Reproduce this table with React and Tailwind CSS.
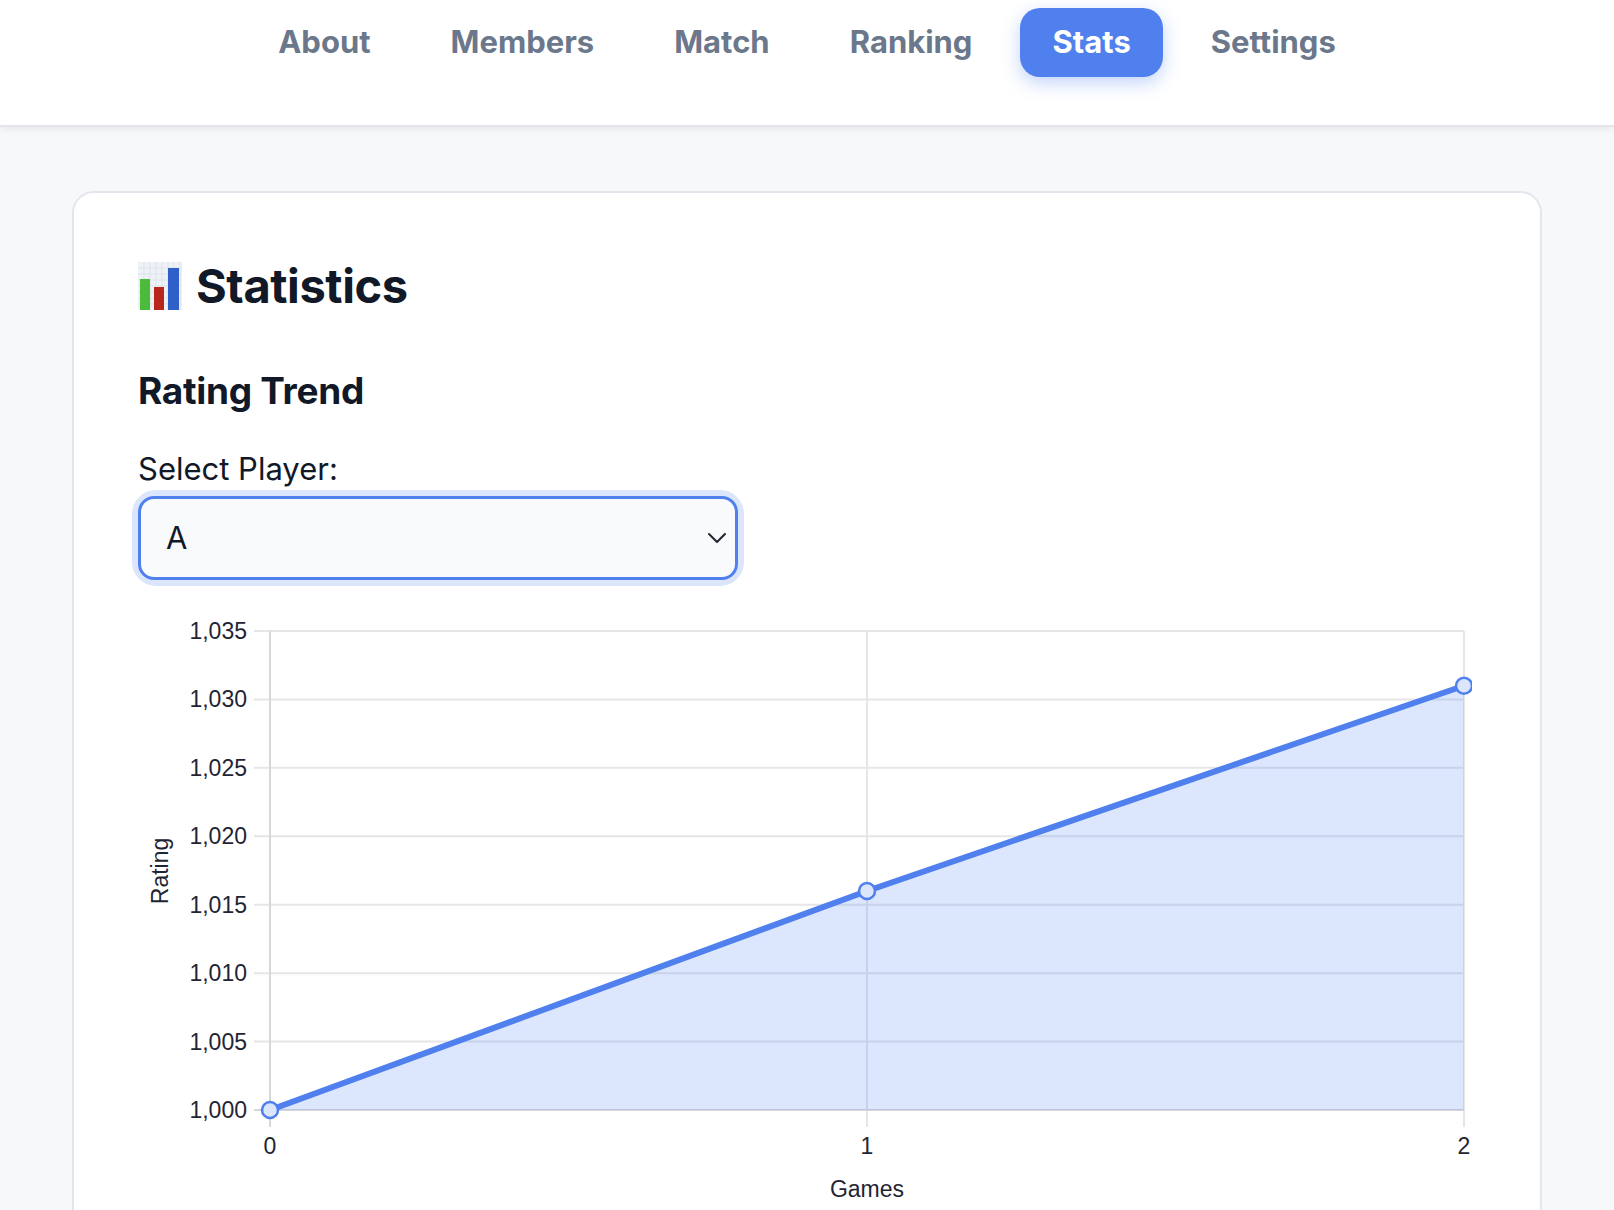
import { useState } from 'react';

const tabs = ['About', 'Members', 'Match', 'Ranking', 'Stats', 'Settings'];

// chart geometry (svg coords)
const left = 132;
const right = 1326;
const top = 31;
const bottom = 510;
const minY = 1000;
const maxY = 1035;
const data = [1000, 1016, 1031];

function yPos(v) {
    return bottom - ((v - minY) / (maxY - minY)) * (bottom - top);
}

function xPos(i) {
    return left + (i / (data.length - 1)) * (right - left);
}

function ChartEmoji() {
    return (
        <svg width="44" height="48" viewBox="0 0 44 48" className="shrink-0">
            <rect x="0" y="0" width="44" height="48" fill="#eef2f7" />
            {[6, 12, 18, 24, 30, 36, 42].map((x) => (
                <line key={'v' + x} x1={x} y1="0" x2={x} y2="48" stroke="#dde3ec" strokeWidth="1" />
            ))}
            {[6, 12, 18, 24, 30, 36, 42].map((y) => (
                <line key={'h' + y} x1="0" y1={y} x2="44" y2={y} stroke="#dde3ec" strokeWidth="1" />
            ))}
            <rect x="2" y="17" width="10" height="31" fill="#4cbb3c" />
            <rect x="16" y="25" width="10" height="23" fill="#b8261c" />
            <rect x="30" y="6" width="11" height="42" fill="#2f5fc8" />
        </svg>
    );
}

function RatingChart() {
    const ticks = [1000, 1005, 1010, 1015, 1020, 1025, 1030, 1035];
    const pts = data.map((v, i) => [xPos(i), yPos(v)]);
    const line = pts.map((p) => p.join(',')).join(' ');
    const area = `${left},${bottom} ${line} ${right},${bottom}`;

    return (
        <svg width="1334" height="620" className="block" style={{ fontFamily: '"Liberation Sans", Arial, sans-serif' }}>
            {/* grid */}
            {ticks.map((t) => (
                <line key={t} x1={116} y1={yPos(t)} x2={right} y2={yPos(t)} stroke="#e6e6e9" strokeWidth="2" />
            ))}
            {data.map((_, i) => (
                <line key={i} x1={xPos(i)} y1={top} x2={xPos(i)} y2={527} stroke="#e6e6e9" strokeWidth="2" />
            ))}
            <line x1={left} y1={top} x2={left} y2={527} stroke="#d6d6db" strokeWidth="2" />
            <line x1={116} y1={bottom} x2={right} y2={bottom} stroke="#d6d6db" strokeWidth="2" />

            {/* labels */}
            {ticks.map((t) => (
                <text key={t} x={109} y={yPos(t) + 8} textAnchor="end" fontSize="23" fill="#1f2533">
                    {t.toLocaleString('en-US')}
                </text>
            ))}
            {data.map((_, i) => (
                <text key={i} x={xPos(i)} y={554} textAnchor="middle" fontSize="23" fill="#1f2533">
                    {i}
                </text>
            ))}
            <text x={729} y={597} textAnchor="middle" fontSize="23" fill="#1f2533">Games</text>
            <text x={0} y={0} textAnchor="middle" fontSize="23" fill="#1f2533" transform="translate(30 271) rotate(-90)">
                Rating
            </text>

            {/* data */}
            <polygon points={area} fill="rgba(79,128,238,0.2)" />
            <polyline points={line} fill="none" stroke="#4f80ee" strokeWidth="6" strokeLinejoin="round" />
            {pts.map(([x, y], i) => (
                <circle key={i} cx={x} cy={y} r="8" fill="#dce6fb" stroke="#4f80ee" strokeWidth="2.5" />
            ))}
        </svg>
    );
}

function App() {
    const [tab, setTab] = useState('Stats');
    const [player, setPlayer] = useState('A');

    return (
        <div className="min-h-screen bg-[#f7f8fa]" style={{ fontFamily: 'Inter, "Noto Sans", sans-serif' }}>
            <header className="h-[127px] bg-white border-b-2 border-[#e4e6ea] shadow-[0_3px_6px_rgba(0,0,0,0.06)] flex justify-center items-start pt-2">
                <nav className="flex gap-4">
                    {tabs.map((t) => (
                        <button
                            key={t}
                            onClick={() => setTab(t)}
                            className={
                                t === tab
                                    ? 'h-[69px] px-8 rounded-[20px] bg-[#4f80ee] text-white text-[31px] font-bold shadow-[0_6px_18px_rgba(79,128,238,0.35)]'
                                    : 'h-[69px] px-8 rounded-[20px] text-[#6b778a] text-[31px] font-bold'
                            }
                        >
                            {t}
                        </button>
                    ))}
                </nav>
            </header>

            <main className="px-[72px] pt-[64px]">
                <div className="bg-white border-2 border-[#e3e6ec] rounded-[22px] px-16 pt-16 pb-10">
                    <h1 className="flex items-center gap-[14px] text-[47px] leading-[58px] font-bold text-[#111827] tracking-[-0.4px]">
                        <ChartEmoji />
                        Statistics
                    </h1>

                    <h2 className="mt-[54px] text-[37px] leading-[44px] font-bold text-[#111827] tracking-[-0.3px]">Rating Trend</h2>

                    <label className="block mt-[37px] text-[31px] leading-[38px] text-[#111827]">Select Player:</label>
                    <div className="mt-[8px] w-[600px] rounded-[18px] ring-[6px] ring-[#dbe6fc]">
                        <div className="relative h-[84px] rounded-[16px] border-[3px] border-[#4f80ee] bg-[#f8fafc] flex items-center pl-[25px]">
                            <select
                                value={player}
                                onChange={(e) => setPlayer(e.target.value)}
                                className="appearance-none bg-transparent outline-none w-full text-[31px] text-[#111827]"
                            >
                                <option>A</option>
                                <option>B</option>
                                <option>C</option>
                            </select>
                            <svg className="absolute right-[8px] top-1/2 -translate-y-1/2 pointer-events-none" width="20" height="12" viewBox="0 0 20 12">
                                <path d="M2 2 L10 10 L18 2" fill="none" stroke="#1f2533" strokeWidth="2" strokeLinecap="round" strokeLinejoin="round" />
                            </svg>
                        </div>
                    </div>

                    <div className="mt-[20px]">
                        <RatingChart />
                    </div>
                </div>
            </main>
        </div>
    );
}

export default App;
